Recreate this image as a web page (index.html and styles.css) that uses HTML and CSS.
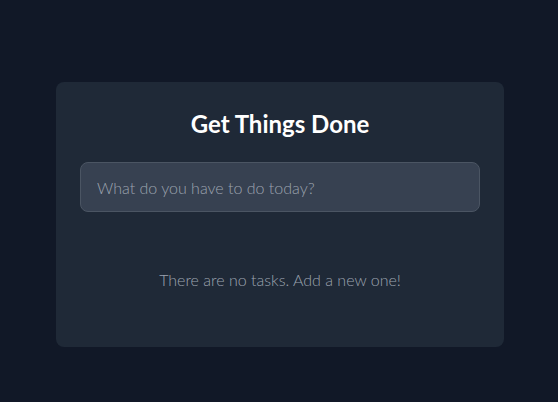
FILE: index.html
```html
<!DOCTYPE html>
<html lang="en">
<head>
<meta charset="utf-8">
<title>Get Things Done</title>
<link rel="stylesheet" href="styles.css">
</head>
<body>
<main class="page">
  <section class="card">
    <h1 class="title">Get Things Done</h1>
    <input class="task-input" type="text" placeholder="What do you have to do today?">
    <p class="empty">There are no tasks. Add a new one!</p>
  </section>
</main>
</body>
</html>
```
FILE: styles.css
```css
* { box-sizing: border-box; }
html, body { margin: 0; padding: 0; }
body {
  background: #111827;
  font-family: Lato, "Noto Sans", sans-serif;
  font-weight: 300;
  color: #e5e7eb;
  min-height: 402px;
}
.page {
  display: flex;
  justify-content: center;
  padding: 82px 0 0 2px;
}
.card {
  width: 448px;
  background: #1f2937;
  border-radius: 8px;
  padding: 24px;
}
.title {
  margin: 0 0 22px;
  padding-top: 2px;
  text-align: center;
  font-size: 24px;
  line-height: 32px;
  font-weight: 700;
  color: #ffffff;
}
.task-input {
  display: block;
  width: 100%;
  height: 50px;
  padding: 12px 16px;
  font-family: inherit;
  font-weight: 300;
  font-size: 16px;
  line-height: 24px;
  color: #f3f4f6;
  background: #374151;
  border: 1px solid #4b5563;
  border-radius: 8px;
  outline: none;
}
.task-input::placeholder { color: #9ca3af; }
.empty {
  margin: 24px 0 0;
  padding: 32px 0 31px;
  text-align: center;
  font-size: 16px;
  line-height: 24px;
  color: #9ca3af;
}
```
